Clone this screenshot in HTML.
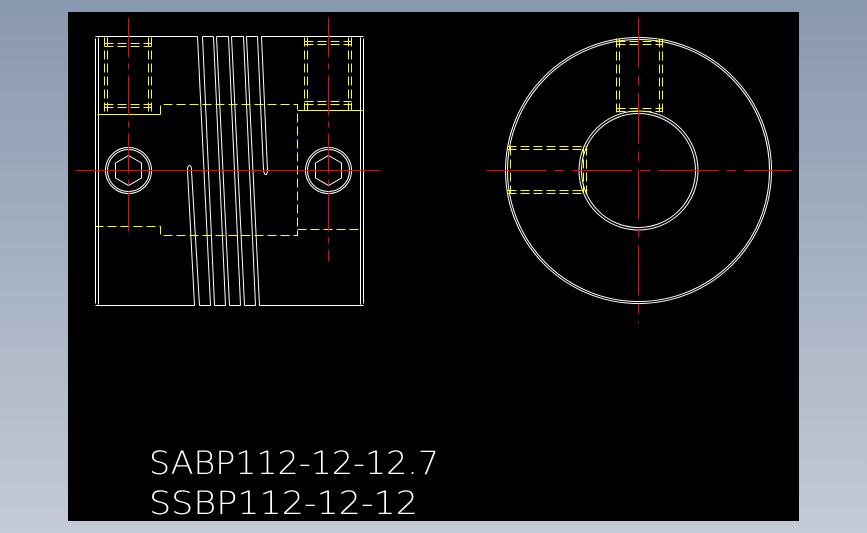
<!DOCTYPE html>
<html><head><meta charset="utf-8"><style>
html,body{margin:0;padding:0}
body{width:867px;height:533px;background:linear-gradient(#8898ae,#c4cad6);overflow:hidden;position:relative}
svg{position:absolute;left:0;top:0}
</style></head><body>
<svg width="867" height="533" viewBox="0 0 867 533">
<rect x="68" y="12" width="731" height="509" fill="#000"/>
<g fill="none" stroke-width="1" transform="translate(0.5,0.5)">
<g stroke="#fff">
<path d="M95,38 V303 M98,37 V304 M360,37 V304 M363,38 V303"/>
<path d="M95,36 H197 M202,36 H213 M216,36 H228 M231,36 H243 M246,36 H257 M261,36 H363"/>
<path d="M95,305 H194 M199,305 H210 M214,305 H225 M229,305 H240 M244,305 H255 M259,305 H363"/>
<path d="M197,36 L210,305 M202,36 L214,305 M213,36 L225,305 M216,36 L229,305 M228,36 L240,305 M231,36 L244,305 M243,36 L255,305 M246,36 L259,305"/>
<path d="M257,36 L263,170 Q264,175 266,174 Q267,172 267,170 L261,36"/>
<path d="M194,305 L187,170 Q187,165 189,165 Q191,165 191,170 L199,305"/>
<circle cx="128" cy="170" r="23"/><circle cx="128" cy="170" r="21"/>
<polygon points="128,155 141,162.5 141,177.5 128,185 115,177.5 115,162.5"/>
<circle cx="328" cy="170" r="23"/><circle cx="328" cy="170" r="21"/>
<polygon points="328,155 341,162.5 341,177.5 328,185 315,177.5 315,162.5"/>
<circle cx="638" cy="170" r="133"/><circle cx="638" cy="170" r="131"/>
<circle cx="638" cy="170" r="59.5"/><circle cx="638" cy="170" r="57"/>
</g>
<g stroke="#ff0">
<path d="M97,114 H160 M297,110 H362"/>
<path d="M104,37 V113 M107,37 V113 M148,37 V113 M151,37 V113 M104,46 H151 M104,43 H151 M104,104 H151 M104,107 H151" stroke-dasharray="9,4"/>
<path d="M304,37 V110 M307,37 V110 M348,37 V110 M351,37 V110 M304,41 H351 M304,44 H351 M304,101 H351 M304,104 H351" stroke-dasharray="9,4"/>
<path d="M160,114 V104 H297 V235 H160 V226 H95 M297,229 H362" stroke-dasharray="9,4"/>
<path d="M616,38 V113 M619,38 V113 M659,38 V113 M662,38 V113 M616,41 H662 M616,44 H662 M616,108 H662 M616,111 H662" stroke-dasharray="9,4"/>
<path d="M507,146 H587 M507,149 H587 M507,190 H587 M507,193 H587 M510,146 V193 M586,146 V193 M583,146 V193" stroke-dasharray="9,4"/>
</g>
<g stroke="#f00">
<path d="M75,170 H380"/>
<path d="M128,17 V237 M328,17 V261" stroke-dasharray="40,6,6,6"/>
<path d="M486,170 H791" stroke-dasharray="60,8,10,8"/>
<path d="M638,17 V323" stroke-dasharray="50,8,10,8"/>
</g>
</g>
<g fill="#fff" font-family="DejaVu Sans, Liberation Sans, sans-serif" font-weight="200" font-size="32">
<text x="149" y="474" textLength="290" lengthAdjust="spacingAndGlyphs">SABP112-12-12.7</text>
<text x="149" y="514" textLength="269" lengthAdjust="spacingAndGlyphs">SSBP112-12-12</text>
</g>
</svg>
</body></html>
